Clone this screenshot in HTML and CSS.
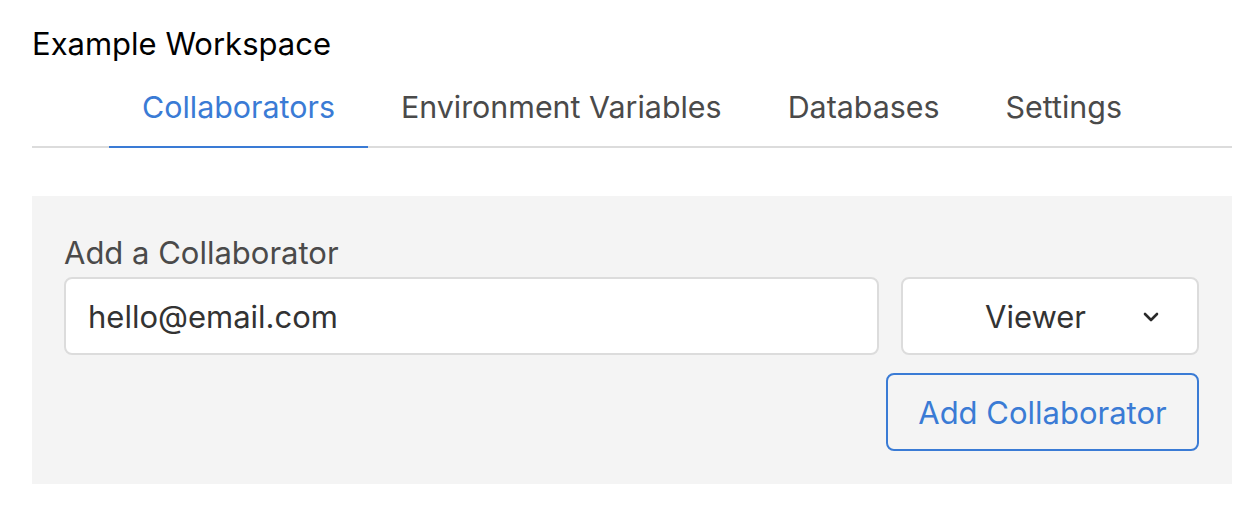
FILE: index.html
```html
<!DOCTYPE html>
<html lang="en">
<head>
<meta charset="utf-8">
<title>Example Workspace</title>
<link rel="stylesheet" href="styles.css">
</head>
<body>
<div class="page">
  <h1 class="title">Example Workspace</h1>
  <nav class="tabs">
    <a class="tab active">Collaborators</a>
    <a class="tab">Environment Variables</a>
    <a class="tab">Databases</a>
    <a class="tab">Settings</a>
  </nav>
  <section class="panel">
    <label class="label">Add a Collaborator</label>
    <div class="row">
      <div class="input">hello@email.com</div>
      <div class="select">
        <span class="select-text">Viewer</span>
        <svg class="chev" width="16" height="10" viewBox="0 0 16 10"><path d="M2 2 L8 8 L14 2" fill="none" stroke="#2a2a2a" stroke-width="2.6" stroke-linecap="round" stroke-linejoin="round"/></svg>
      </div>
    </div>
    <div class="actions">
      <button class="btn">Add Collaborator</button>
    </div>
  </section>
</div>
</body>
</html>
```
FILE: styles.css
```css
* { box-sizing: border-box; }
html, body { margin: 0; padding: 0; background: #fff; }
body { font-family: Inter, "Open Sans", sans-serif; }
.page { padding: 24px 24px 0 32px; width: 1256px; }
.title { margin: 0; font-size: 31px; font-weight: 400; line-height: 40px; color: #000; }
.tabs {
  display: flex; justify-content: center;
  border-bottom: 2px solid #dcdcdc;
  width: 1200px;
}
.tab {
  font-size: 30.4px; line-height: 40px; color: #4a4a4a;
  padding: 23px 33px 19px; margin-bottom: -2px;
  border-bottom: 2px solid transparent;
}
.tab.active { color: #3a7bd5; border-bottom-color: #3a7bd5; }
.panel {
  width: 1200px; margin-top: 48px; background: #f4f4f4;
  padding: 39px 33px 33px 32px;
}
.label { display: block; font-size: 31px; line-height: 36px; color: #4a4a4a; }
.row { display: flex; gap: 22px; margin-top: 6px; }
.input {
  flex: 1; height: 78px; background: #fff; border: 2px solid #dcdcdc; border-radius: 8px;
  font-size: 31px; color: #333; padding: 0 22px; display: flex; align-items: center;
}
.select {
  width: 298px; height: 78px; background: #fff; border: 2px solid #dcdcdc; border-radius: 8px;
  display: flex; align-items: center; position: relative;
}
.select-text { font-size: 31px; color: #333; margin-left: 82px; }
.chev { position: absolute; right: 38px; top: 33px; }
.actions { display: flex; justify-content: flex-end; margin-top: 18px; }
.btn {
  width: 313px; height: 78px; background: transparent; border: 2px solid #3a7bd5; border-radius: 8px;
  color: #3a7bd5; font-family: inherit; font-size: 31px; padding: 0;
}
```
